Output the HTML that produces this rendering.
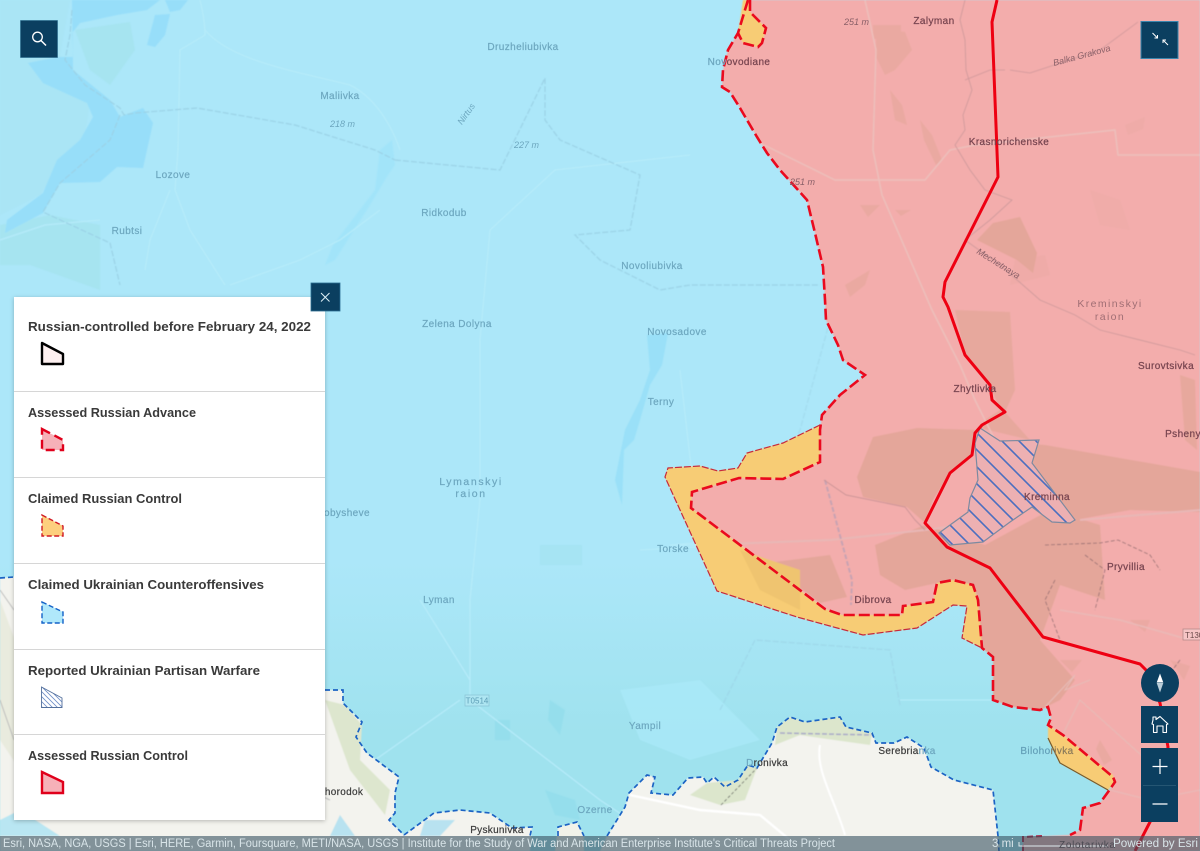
<!DOCTYPE html>
<html><head><meta charset="utf-8"><style>
html,body{margin:0;padding:0;width:1200px;height:851px;overflow:hidden;background:#ace7f9}
svg{display:block;position:absolute;left:0;top:0}
text{font-family:"Liberation Sans",sans-serif}
.b{font-size:10px;fill:#6da7bf;stroke:#6da7bf;stroke-width:.2;text-anchor:middle;letter-spacing:.4px}
.p{font-size:10px;fill:#784550;stroke:#784550;stroke-width:.25;text-anchor:middle;letter-spacing:.4px}
.k{font-size:10px;fill:#3a3a3a;stroke:#3a3a3a;stroke-width:.2;text-anchor:middle;letter-spacing:.3px}
.ib{font-size:9px;font-style:italic;fill:#6da7bf}
.ip{font-size:9px;font-style:italic;fill:#8a6068}
.l{font-size:13px;font-weight:bold;fill:#3a3a3a}
.rd{fill:none;stroke:#b6ebf9;stroke-width:1.3}
.rp{fill:none;stroke:#edbfbb;stroke-width:1.5}
.bd{fill:none;stroke:#9bd2e6;stroke-width:1.2;stroke-dasharray:6 2}
.front{fill:none;stroke:#ea0a1e;stroke-width:2.6;stroke-dasharray:11 4}
.thin{fill:none;stroke:#c8283a;stroke-width:1.2;stroke-dasharray:7 2}
.uk{fill:none;stroke:#1b63c4;stroke-width:1.7;stroke-dasharray:5 3}
.btn{fill:#0b3f60}
</style></head><body>
<svg width="1200" height="851" viewBox="0 0 1200 851" xmlns="http://www.w3.org/2000/svg">
<defs>
<linearGradient id="tint" x1="0" y1="0" x2="0" y2="1"><stop offset="0" stop-color="#9fe2ee" stop-opacity="0"/><stop offset=".6" stop-color="#9fe2ee" stop-opacity="1"/></linearGradient>
<pattern id="h" width="17" height="17" patternUnits="userSpaceOnUse"><path d="M-3 -3L20 20M-3 14L3 20M14 -3L20 3" stroke="#4b6fc0" stroke-width="1.6"/></pattern>
<pattern id="h2" width="5" height="5" patternUnits="userSpaceOnUse"><path d="M-1 -1L6 6M-1 4L1 6M4 -1L6 1" stroke="#6d8dc6" stroke-width=".8"/></pattern>
<filter id="s" x="-20%" y="-20%" width="140%" height="140%"><feGaussianBlur stdDeviation=".5"/></filter>
<filter id="sh" x="-5%" y="-5%" width="110%" height="110%"><feDropShadow dx="0" dy="1" stdDeviation="2" flood-opacity=".25"/></filter>
</defs>

<!-- base -->
<rect width="1200" height="851" fill="#ace7f9"/>
<rect x="0" y="560" width="1200" height="291" fill="url(#tint)"/>
<g filter="url(#s)">
<path d="M0 0H70L60 55 90 100 85 135 60 165 40 195 0 215Z" fill="#a8e4f2" opacity=".5"/>
<path d="M75 30L130 22 135 50 110 85 90 70Z" fill="#a4e2ec" opacity=".7"/>
<path d="M0 225L50 215 100 225 100 290 30 265 0 265Z" fill="#a4e2ec" opacity=".7"/>
<path d="M540 545h42v20h-42z" fill="#a0e2ee" opacity=".5"/>
<path d="M620 690L700 680 760 740 690 760 640 740Z" fill="#abe9f9" opacity=".7"/>
<!-- water -->
<path d="M72 0L160 0 147 10 117 15 80 23 72 33 73 57 58 57 28 63 43 83 87 103 93 117 80 140 57 160 43 193 7 220 5 233 43 213 60 183 100 182 117 167 143 168 153 123 143 108 120 117 110 100 73 70Z" fill="#97def9"/>
<path d="M165 0H188L180 10 170 12ZM155 15L170 14 165 35 155 47 147 45Z" fill="#97def9"/>
<path d="M647 335L668 333 662 365 650 385 640 420 634 440 624 450 622 505 615 480 625 430 640 400 650 370Z" fill="#9ae0f8"/>
<path d="M370 205L388 175 395 165 392 140 380 150 375 190 333 245 325 265 335 260Z" fill="#a2e4f9"/>
<path d="M495 720h15v20h-15zM550 700l15 10-5 25-12-15zM545 790l30 10 5 20-25-5z" fill="#95deec"/>
<!-- roads blue -->
<path class="rd" d="M200 0C205 20 205 30 205 35L180 50 178 150 175 190 190 230 225 285M205 30C230 60 290 70 350 85 380 100 395 135 400 150"/>
<path class="rd" d="M380 210L340 240 300 260 230 285M170 190L150 240 145 270"/>
<path class="rd" d="M460 700L375 760M470 700L600 800 630 820M470 700L470 600 480 500 480 340 490 230 555 170 690 155"/>
<path class="rd" d="M420 600L470 680M0 240L45 225 100 220"/>
<path class="rd" d="M680 370L700 545 670 545 730 540"/>
<path class="rd" d="M640 550L730 545M1048 700L900 700"/>
<!-- boundary blue -->
<path class="bd" d="M72 10L70 35 65 60 85 85 120 108 124 115 135 113 197 108 295 125 375 150 395 160"/>
<path class="bd" d="M120 115L110 140 60 183 43 212 110 243 120 285"/>
<path class="bd" d="M395 160L500 170 545 78 545 120 560 140 640 175 630 230 575 235 600 260 660 290 690 285 770 285 820 285"/>
<path class="bd" d="M830 320L800 430 770 500" stroke-opacity=".5"/>
<path class="bd" d="M720 710L755 640 890 650 900 705" stroke-opacity=".7"/>

<!-- land -->
<path d="M0 578L16 577 325 690 343 690 343 703 362 722 356 737 367 753 399 777 395 793 395 813 389 820 404 835 434 813 460 810 490 813 512 828 532 827 530 851 0 851Z" fill="#f3f3ee"/>
<path d="M558 827L577 822 584 836 584 851 555 851Z" fill="#f1f2e9"/>
<path d="M607 836L625 807 629 793 647 775 655 777 651 793 673 795 688 778 703 777 707 783 714 777 725 787 738 780 748 765 757 768 772 743 777 727 790 717 805 722 840 717 846 727 872 733 876 743 894 743 907 737 924 748 931 767 954 780 993 790 998 836 1000 851 600 851Z" fill="#f3f3ee"/>
<path d="M777 727L790 717 805 722 840 717 846 727 872 733 870 745 820 738 800 735 775 745ZM707 783L738 780 748 765 757 768 745 800 720 805 690 795Z" fill="#dce6cc"/>
<path d="M0 600L30 680 80 700 70 780 40 800 0 740Z" fill="#e2e6d4" opacity=".6"/>
<path d="M325 700L345 705 362 725 360 760 390 790 385 815 350 770Z" fill="#dde6ce"/>
<path d="M425 820h30l-15 16h-20zM340 815l15 21h-25z" fill="#b8e2f0"/>
<path d="M0 820L20 810 60 836H0Z" fill="#b9e6f2"/>
<path d="M630 795L700 810 760 815 790 840" fill="none" stroke="#fff" stroke-width="2.4"/>
<path d="M820 745C815 770 835 800 845 835" fill="none" stroke="#fff" stroke-width="2"/>
<path d="M0 700L14 740M0 590L14 610M240 760L330 800" fill="none" stroke="#bbb" stroke-width="1"/>
<path d="M721 805L757 768" fill="none" stroke="#555" stroke-width=".8" stroke-dasharray="3 2"/>
<path d="M780 733L872 735" fill="none" stroke="#a8a8c8" stroke-width="1.5" stroke-dasharray="5 2"/>

<!-- pink territory -->
<path id="ru" d="M748 0L738 33 728 50 723 70 722 87 730 92 740 108 757 137 767 153 780 170 807 200 815 233 823 267 825 300 826 320 838 345 843 360 865 375 840 395 822 415 820 430 820 462 783 479 739 478 692 492 691 508 825 609 842 615 902 615 903 606 933 602 937 583 953 580 973 585 978 600 982 648 993 657 993 700 1013 707 1040 710 1048 707 1051 718 1048 725 1063 735 1113 777 1115 782 1108 792 1100 803 1083 808 1080 830 1070 835 1023 837 1023 851 1200 851 1200 0Z" fill="#f3adac"/>
<!-- dark patches -->
<g fill="#e4a69a">
<path d="M857 477L873 437 917 428 975 430 972 455 950 473 933 500 925 523 907 507 863 497Z"/>
<path d="M875 545L925 525 985 545 1050 510 1100 525 1105 600 1060 585 1040 640 1075 680 1060 700 1040 710 1013 707 993 700 993 657 982 648 978 600 973 585 953 580 937 583 905 590 880 575Z"/>
<path d="M767 563L830 555 847 597 820 603Z"/>
<path d="M1000 442L1045 445 1200 472 1200 512 1130 510 1075 520 1032 463Z"/>
<path d="M977 240L993 223 1020 217 1037 253 1033 273 1017 260Z"/>
<path d="M955 310L1010 312 1015 390 1005 412 1030 440 980 428 985 420 1000 410 990 385 965 355Z" opacity=".8"/>
<path d="M1180 375L1195 380 1197 450 1185 440Z" opacity=".8"/>
<path d="M873 25h28v14h-28zM877 28L905 32 912 50 895 70 885 75 875 55ZM890 90l12 15 5 20-12-5zM920 120l12 15 10 25-6 5-12-25z" opacity=".6"/>
<path d="M845 285l25-15 -5 15 -15 12zM860 205h20l-12 12zM895 210h16l-10 6z" opacity=".6"/>
<path d="M1010 285l40-10 -5-20-30 5zM1125 125l20-8-2 12-15 6z" opacity=".25"/>
<path d="M1090 190l30 10 10 30-30-5z" opacity=".15"/>
<path d="M1060 660h22l-10 12zM1100 740l12 20-8 5-8-16z" opacity=".6"/>
<path d="M1170 660l20 6-6 14zM1130 620h20l-5 12z" opacity=".5"/>
</g>
<!-- roads in pink -->
<path class="rp" d="M865 0L876 50 873 150 882 195 932 310 960 365 975 400 995 440 1012 490"/>
<path class="rp" d="M760 143L835 180 870 180 925 180 950 150 975 145 1115 130 1118 155 1200 155"/>
<path d="M1010 70L1030 73 1100 50 1138 22M965 80L990 70 1005 70" fill="none" stroke="#d69c9f" stroke-width="1"/>
<path d="M965 0L960 20 965 40 966 70 972 90 963 115 965 130 955 145 970 170 985 190 1012 200 990 220 965 240 1000 265 1040 300 1075 315 1100 330 1180 350 1195 355" fill="none" stroke="#cf9a9c" stroke-width=".9"/>
<path d="M700 545L830 540 925 530 1000 520M1080 520L1200 510" fill="none" stroke="#e8b7b6" stroke-width="2"/>
<path d="M825 480L852 580 851 605" fill="none" stroke="#c7a3b2" stroke-width="2" stroke-dasharray="5 2"/>
<path d="M824 480L846 495 905 507 915 520 925 530" fill="none" stroke="#c79295" stroke-width=".9"/>
<path d="M1045 545L1100 543 1118 540 1150 555 1160 570M1055 580L1045 600 1060 640M1085 555L1105 570 1095 610M1180 660L1165 680" fill="none" stroke="#8f6b70" stroke-width=".8" stroke-dasharray="4 2"/>
<path d="M1045 707L1075 675 1065 690 1090 680M1060 740L1080 700 1180 790" fill="none" stroke="#e6bcb8" stroke-width="1"/>
<path d="M1190 640L1120 620 1060 610" fill="none" stroke="#eab9b7" stroke-width="1.5"/>
<path d="M1110 790L1150 800 1200 790" fill="none" stroke="#eab9b7" stroke-width="1.2"/>
<!-- yellow -->
<path d="M820 425L783 443 747 453 738 468 718 471 700 466 668 468 665 477 717 591 797 617 863 635 917 628 953 605 967 606 962 638 982 648 978 600 973 585 953 580 937 583 933 602 903 606 902 615 842 615 825 609 691 508 692 492 739 478 783 479 820 462Z" fill="#f7cc74"/>
<path d="M743 0L738 33 743 43 758 47 762 43 766 28 750 12 750 0Z" fill="#f7cc74"/>
<path d="M1048 725L1048 738 1060 763 1108 790 1115 782 1113 775 1063 735Z" fill="#f7cc74"/>
<path d="M740 550L800 570 800 610 760 590Z" fill="#efc46f"/>
</g>
<!-- partisan -->
<path d="M980 428L1000 441 1039 440 1032 463 1075 520 1070 523 1052 522 1032 507 1010 522 983 542 950 545 939 533 968 512 970 498 978 480 975 443Z" fill="#edb0b2"/>
<path d="M980 428L1000 441 1039 440 1032 463 1075 520 1070 523 1052 522 1032 507 1010 522 983 542 950 545 939 533 968 512 970 498 978 480 975 443Z" fill="url(#h)" stroke="#7d8aa0" stroke-width="1.2"/>
<!-- front lines -->
<path class="front" d="M748 0L738 33 728 50 723 70 722 87 730 92 740 108 757 137 767 153 780 170 807 200 815 233 823 267 825 300 826 320 838 345 843 360 865 375 840 395 822 415 820 430 820 462 783 479 739 478 692 492 691 508 825 609 842 615 902 615 903 606 933 602 937 583 953 580 973 585 978 600 982 648 993 657 993 700 1013 707 1040 710 1048 707 1051 718 1048 725 1063 735 1113 777 1115 782 1108 792 1100 803 1083 808 1080 830 1070 835"/>
<path class="front" stroke-width="2.2" d="M750 0L750 12 766 28 762 43 758 47 743 43 738 33"/>
<path class="thin" d="M820 425L783 443 747 453 738 468 718 471 700 466 668 468 665 477 717 591 797 617 863 635 917 628 953 605 967 606 962 638 982 648"/>
<path d="M1048 738L1060 763 1108 790" fill="none" stroke="#7a5a2a" stroke-width="1.2"/>
<path d="M1023 851V837L1045 836" fill="none" stroke="#b01030" stroke-width="2" stroke-dasharray="6 3"/>
<!-- blue border -->
<path class="uk" d="M325 690L343 690 343 703 362 722 356 737 367 753 399 777 395 793 395 813 389 820 404 835M404 835L434 813 460 810 490 813 512 828 532 827 530 836M558 836L558 827 577 822 584 836M607 836L625 807 629 793 647 775 655 777 651 793 673 795 688 778 703 777 707 783 714 777 725 787 738 780 748 765 757 768 772 743 777 727 790 717 805 722 840 717 846 727 872 733 876 743 894 743 907 737 924 748 931 767 954 780 993 790 998 836 999 851M0 578L14 577"/>
<!-- red line -->
<path d="M997 0L992 22 998 177 945 282 943 297 948 307 965 355 990 385 992 400 1005 412 982 425 975 433 972 455 950 473 925 523 947 547 990 568 1043 637 1140 664 1146 670 1160 703 1168 747 1160 800 1150 822 1135 851" fill="none" stroke="#ee0012" stroke-width="3" stroke-linejoin="round"/>

<!-- labels -->
<text class="b" x="523" y="50">Druzheliubivka</text>
<text class="b" x="340" y="99">Maliivka</text>
<text class="b" x="173" y="178">Lozove</text>
<text class="b" x="127" y="234">Rubtsi</text>
<text class="b" x="444" y="216">Ridkodub</text>
<text class="b" x="652" y="269">Novoliubivka</text>
<text class="b" x="677" y="335">Novosadove</text>
<text class="b" x="661" y="405">Terny</text>
<text class="b" x="457" y="327">Zelena Dolyna</text>
<text class="b" x="471" y="485" style="letter-spacing:1.6px;font-size:10.5px">Lymanskyi</text>
<text class="b" x="471" y="497" style="letter-spacing:1.6px;font-size:10.5px">raion</text>
<text class="b" x="347" y="516">obysheve</text>
<text class="b" x="439" y="603">Lyman</text>
<text class="b" x="673" y="552">Torske</text>
<text class="b" x="645" y="729">Yampil</text>
<text class="b" x="595" y="813">Ozerne</text>
<text class="p" x="739" y="65"><tspan style="fill:#6da7bf;stroke:#6da7bf">Nov</tspan>ovodiane</text>
<text class="ib" x="330" y="127">218 m</text>
<text class="ib" x="514" y="148">227 m</text>
<text class="ib" x="454" y="120" transform="rotate(-55 463 115)">Nirtus</text>
<text class="p" x="934" y="24">Zalyman</text>
<text class="p" x="1009" y="145">Krasnorichenske</text>
<text class="p" x="975" y="392">Zhytlivka</text>
<text class="p" x="1047" y="500">Kreminna</text>
<text class="p" x="873" y="603">Dibrova</text>
<text class="p" x="1126" y="570">Pryvillia</text>
<text class="p" x="1166" y="369">Surovtsivka</text>
<text class="p" x="1183" y="437">Psheny</text>
<text x="1110" y="307" style="font-size:10.5px;fill:#a06e74;text-anchor:middle;letter-spacing:1.4px">Kreminskyi</text>
<text x="1110" y="320" style="font-size:10.5px;fill:#a06e74;text-anchor:middle;letter-spacing:1.4px">raion</text>
<text class="ip" x="844" y="25">251 m</text>
<text class="ip" x="790" y="185">251 m</text>
<text class="ip" x="1054" y="66" transform="rotate(-15 1054 66)">Balka Grakova</text>
<text class="ip" x="976" y="253" transform="rotate(32 976 253)">Mechetnaya</text>
<text class="k" x="344" y="795">horodok</text>
<text class="k" x="497" y="833">Pyskunivka</text>
<text class="k" x="767" y="766"><tspan style="fill:#6da7bf;stroke:#6da7bf">D</tspan>ronivka</text>
<text class="k" x="907" y="754"><tspan>Serebria</tspan><tspan style="fill:#6da7bf;stroke:#6da7bf">nka</tspan></text>
<text class="b" x="1047" y="754" style="fill:#5d9ab3"><tspan>Biloho</tspan><tspan style="fill:#8a7a5a;stroke:#8a7a5a">rivka</tspan></text>
<rect x="465" y="695" width="24" height="11" fill="#aee6f2" stroke="#8cc6d8" stroke-width=".8"/>
<text x="477" y="703.500" style="font-size:8px;fill:#5c9cb5;text-anchor:middle">T0514</text>
<rect x="1183" y="629" width="20" height="11" fill="#f6c5c5" stroke="#b78a8a" stroke-width=".8"/>
<text x="1185" y="638" style="font-size:8px;fill:#6a4a4a">T130</text>

<!-- attribution -->
<rect x="0" y="836" width="1200" height="15" fill="#3c5664" opacity=".62"/>
<text x="3" y="847" textLength="832" lengthAdjust="spacingAndGlyphs" style="font-size:11.500px;fill:#d8e4e8">Esri, NASA, NGA, USGS | Esri, HERE, Garmin, Foursquare, METI/NASA, USGS | Institute for the Study of War and American Enterprise Institute's Critical Threats Project</text>
<text x="992" y="847" style="font-size:11.500px;fill:#d8e4e8">3 mi</text>
<path d="M1019 842V846H1108" fill="none" stroke="#dfe8ec" stroke-width="1"/>
<text x="1059" y="848" textLength="56" style="font-size:10px;fill:#4a4a52">Zolotarivka</text>
<text x="1113" y="847" textLength="85" lengthAdjust="spacingAndGlyphs" style="font-size:11.500px;fill:#d8e4e8">Powered by Esri</text>

<!-- panel -->
<rect x="14" y="297" width="311" height="523" fill="#fff" filter="url(#sh)"/>
<g fill="#d6d6d6">
<rect x="14" y="391" width="311" height="1"/><rect x="14" y="477" width="311" height="1"/><rect x="14" y="563" width="311" height="1"/><rect x="14" y="649" width="311" height="1"/><rect x="14" y="734" width="311" height="1"/>
</g>
<text class="l" x="28" y="331" textLength="283" lengthAdjust="spacingAndGlyphs">Russian-controlled before February 24, 2022</text>
<text class="l" x="28" y="417" textLength="168" lengthAdjust="spacingAndGlyphs">Assessed Russian Advance</text>
<text class="l" x="28" y="503" textLength="154" lengthAdjust="spacingAndGlyphs">Claimed Russian Control</text>
<text class="l" x="28" y="589" textLength="236" lengthAdjust="spacingAndGlyphs">Claimed Ukrainian Counteroffensives</text>
<text class="l" x="28" y="675" textLength="232" lengthAdjust="spacingAndGlyphs">Reported Ukrainian Partisan Warfare</text>
<text class="l" x="28" y="760" textLength="160" lengthAdjust="spacingAndGlyphs">Assessed Russian Control</text>
<!-- legend icons -->
<path d="M42 343L63 354V364H42Z" fill="#fdf0f0" stroke="#000" stroke-width="2.400" stroke-linejoin="round"/>
<path d="M42 429L63 440V450H42Z" fill="#f6b1b8" stroke="#e0001b" stroke-width="2.400" stroke-dasharray="9 5"/>
<path d="M42 515L63 526V536H42Z" fill="#fdcf7e" stroke="#d01a24" stroke-width="1.400" stroke-dasharray="5 2.500"/>
<path d="M42 602L63 612V623H42Z" fill="#b0e8fb" stroke="#1462c8" stroke-width="1.400" stroke-dasharray="5 2.500"/>
<path d="M41.500 687L62 698V707.500H41.500Z" fill="url(#h2)" stroke="#54709c" stroke-width=".9"/>
<path d="M42 772L63 782V793H42Z" fill="#f6b1b8" stroke="#e0001b" stroke-width="2.400"/>

<!-- close button -->
<rect x="311" y="283" width="29" height="28" class="btn" stroke="#2a6d91" stroke-width=".8"/>
<path d="M321 293L329.500 301.500M329.500 293L321 301.500" stroke="#dff0f7" stroke-width="1"/>
<!-- search -->
<rect x="20.500" y="20.500" width="37" height="37" class="btn" stroke="#26678a" stroke-width=".6"/>
<circle cx="37.500" cy="37" r="4.800" fill="none" stroke="#fff" stroke-width="1.300"/>
<path d="M41 40.500L46 45.500" stroke="#fff" stroke-width="1.500"/>
<!-- collapse -->
<rect x="1141" y="21.500" width="37" height="37" class="btn" stroke="#3a85ad" stroke-width="1"/>
<path d="M1152.500 33L1157.500 38M1157.500 35V38H1154.500M1168 45L1163 40M1163 43V40H1166" fill="none" stroke="#fff" stroke-width="1"/>
<!-- compass -->
<circle cx="1160" cy="683" r="19" class="btn"/>
<path d="M1160 673.500L1163.300 682.500H1156.700Z" fill="#fff"/>
<path d="M1160 692.500L1163.300 683H1156.700Z" fill="#b9cdd8"/>
<!-- home -->
<rect x="1141" y="706" width="37" height="37" class="btn"/>
<path d="M1153 717V720L1152 724 1153.500 724.500V732.500H1157V726H1163V732.500H1166.500V724.500L1168 724 1160 716.500 1156 719.500V717Z" fill="none" stroke="#fff" stroke-width="1.100" stroke-linejoin="round"/>
<!-- zoom -->
<rect x="1141" y="748" width="37" height="74" class="btn"/>
<rect x="1143" y="785" width="33" height=".8" fill="#2c5c78"/>
<path d="M1152.500 766.500H1167.500M1160 759V774M1152.500 804H1167.500" stroke="#fff" stroke-width="1.200" fill="none"/>
</svg>
</body></html>
